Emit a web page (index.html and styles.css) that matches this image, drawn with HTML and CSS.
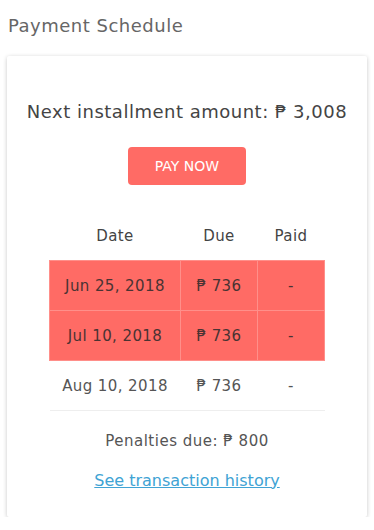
FILE: index.html
```html
<!DOCTYPE html>
<html lang="en">
<head>
<meta charset="UTF-8">
<meta name="viewport" content="width=device-width, initial-scale=1.0">
<title>Payment Schedule</title>
<link rel="stylesheet" href="styles.css">
</head>
<body>

<h2 class="page-title">Payment Schedule</h2>

<div class="card">
    <h3 class="next-amount">Next installment amount: ₱ 3,008</h3>

    <div class="pay">
        <button class="pay-button">PAY NOW</button>
    </div>

    <table class="schedule">
        <thead>
            <tr>
                <th class="col-date">Date</th>
                <th class="col-due">Due</th>
                <th class="col-paid">Paid</th>
            </tr>
        </thead>
        <tbody>
            <tr class="overdue">
                <td>Jun 25, 2018</td>
                <td>₱ 736</td>
                <td>-</td>
            </tr>
            <tr class="overdue">
                <td>Jul 10, 2018</td>
                <td>₱ 736</td>
                <td>-</td>
            </tr>
            <tr>
                <td>Aug 10, 2018</td>
                <td>₱ 736</td>
                <td>-</td>
            </tr>
        </tbody>
    </table>

    <p class="penalties">Penalties due: ₱ 800</p>

    <p class="history"><a href="#">See transaction history</a></p>
</div>

</body>
</html>
```

FILE: styles.css
```css
body {
    font-family: "DejaVu Sans", sans-serif;
    background-color: #fff;
    color: #555;
    margin: 0;
    padding: 0;
}

.page-title {
    margin: 0;
    padding: 15px 8px 0;
    font-size: 18px;
    letter-spacing: 0.5px;
    font-weight: normal;
    color: #666;
    line-height: 22px;
}

.card {
    margin: 19px 7px 0;
    width: 360px;
    height: 461px;
    box-sizing: border-box;
    padding-top: 43px;
    background-color: #fff;
    border-radius: 2px;
    box-shadow: 0 1px 4px rgba(0, 0, 0, 0.22);
}

.next-amount {
    margin: 0;
    text-align: center;
    font-size: 18px;
    letter-spacing: 0.5px;
    font-weight: normal;
    color: #444;
    line-height: 26px;
}

.pay {
    text-align: center;
    margin-top: 22px;
}

.pay-button {
    width: 118px;
    height: 38px;
    background-color: #ff6b65;
    color: #fff;
    border: none;
    border-radius: 4px;
    font-family: inherit;
    font-size: 14px;
    cursor: pointer;
}

.schedule {
    width: 276px;
    margin: 25px auto 0;
    border-collapse: collapse;
    font-size: 15px;
    letter-spacing: 0.4px;
}

.schedule th {
    font-weight: normal;
    color: #444;
    height: 50px;
    padding: 3px 0 0;
    box-sizing: border-box;
}

.schedule td {
    text-align: center;
    height: 47px;
    padding: 2px 0 0;
    color: #555;
    border-bottom: 1px solid #eee;
}

.col-date {
    width: 131px;
}

.col-due {
    width: 77px;
}

.schedule .overdue td {
    background-color: #ff6b65;
    color: #4a3333;
    border: 1px solid #ff8f8a;
}

.penalties {
    margin: 20px 0 0;
    text-align: center;
    font-size: 15px;
    letter-spacing: 0.5px;
    line-height: 20px;
    color: #555;
}

.history {
    margin: 20px 0 0;
    text-align: center;
    font-size: 16px;
    line-height: 20px;
}

.history a {
    color: #40a3d4;
}
```
